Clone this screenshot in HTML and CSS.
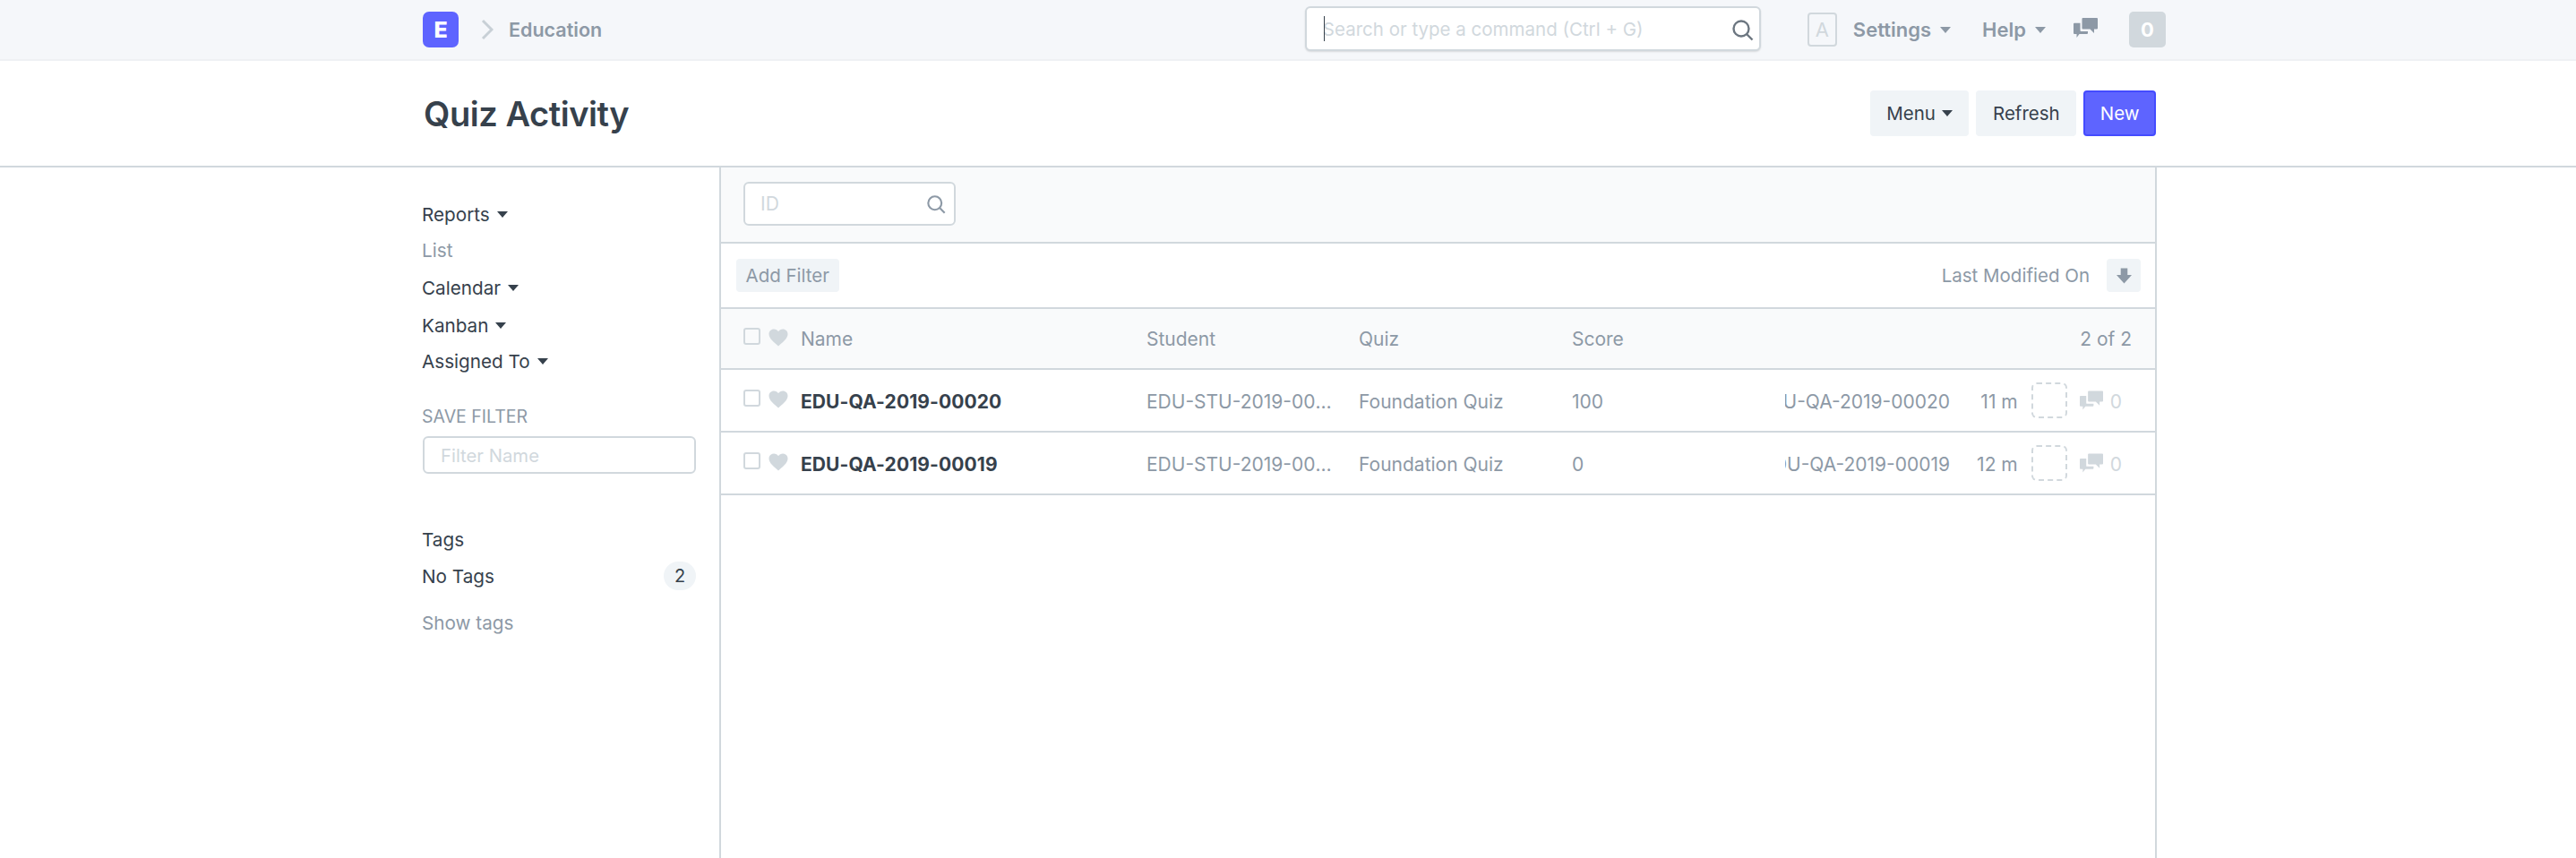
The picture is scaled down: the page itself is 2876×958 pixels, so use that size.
FILE: index.html
```html
<!DOCTYPE html>
<html lang="en">
<head>
<meta charset="utf-8">
<title>Quiz Activity</title>
<link rel="stylesheet" href="styles.css">
</head>
<body>
<header class="navbar">
  <div class="wrap nav-inner">
    <div class="brand">E</div>
    <svg class="crumb-chevron" viewBox="0 0 14 24"><path d="M2 2 L12 12 L2 22"/></svg>
    <span class="crumb">Education</span>
    <div class="nav-search">
      <input class="nav-input" type="text" placeholder="Search or type a command (Ctrl + G)">
      <span class="text-caret"></span>
      <svg class="search-icon nav-search-icon" viewBox="0 0 24 24"><circle cx="10" cy="10" r="8.5"/><path d="M16 16 L22.5 22.5"/></svg>
    </div>
    <div class="avatar">A</div>
    <span class="nav-link nav-settings">Settings<i class="caret caret-nav"></i></span>
    <span class="nav-link nav-help">Help<i class="caret caret-nav"></i></span>
    <svg class="nav-chat" viewBox="0 0 27 22"><path d="M10.5 0H26a1 1 0 0 1 1 1v10.5a1 1 0 0 1-1 1h-3V17l-4.500-4.500H10.500a1 1 0 0 1-1-1V1a1 1 0 0 1 1-1z"/><path d="M1 5.700H7.500V14a1 1 0 0 0 1 1H16v2a1 1 0 0 1-1 1H6.500L3.500 22v-4H1a1 1 0 0 1-1-1V6.700a1 1 0 0 1 1-1z"/></svg>
    <div class="notif">0</div>
  </div>
</header>

<section class="page-head">
  <div class="wrap head-inner">
    <h1 class="title">Quiz Activity</h1>
    <div class="actions">
      <button class="btn">Menu<i class="caret caret-dark caret-btn"></i></button>
      <button class="btn">Refresh</button>
      <button class="btn btn-primary">New</button>
    </div>
  </div>
</section>

<div class="wrap body-row">
  <aside class="sidebar">
    <ul class="side-list">
      <li class="side-item">Reports<i class="caret caret-dark"></i></li>
      <li class="side-item side-muted">List</li>
      <li class="side-item side-tall">Calendar<i class="caret caret-dark"></i></li>
      <li class="side-item">Kanban<i class="caret caret-dark"></i></li>
      <li class="side-item">Assigned To<i class="caret caret-dark"></i></li>
    </ul>
    <div class="side-label">SAVE FILTER</div>
    <input class="side-input" type="text" placeholder="Filter Name">
    <div class="side-tags">Tags</div>
    <div class="side-notag"><span>No Tags</span><span class="count">2</span></div>
    <div class="side-show">Show tags</div>
  </aside>

  <main class="main">
    <div class="filter-bar">
      <div class="id-field">
        <input class="id-input" type="text" placeholder="ID">
        <svg class="search-icon id-search-icon" viewBox="0 0 24 24"><circle cx="10" cy="10" r="8.500"/><path d="M16 16 L22.500 22.500"/></svg>
      </div>
    </div>
    <div class="sort-bar">
      <span class="add-filter">Add Filter</span>
      <div class="sort-right">
        <span class="sort-label">Last Modified On</span>
        <span class="sort-btn"><svg viewBox="0 0 18 18"><path d="M5 0h8v8h5l-9 10-9-10h5z"/></svg></span>
      </div>
    </div>
    <div class="row row-head">
      <div class="cell-name">
        <span class="check"></span>
        <svg class="heart" viewBox="0 0 22 20"><path d="M11 19.500 C7 15.500 0.500 11.500 0.500 6 C0.500 2.800 3 0.500 6 0.500 C8 0.500 10 1.500 11 3.200 C12 1.500 14 0.500 16 0.500 C19 0.500 21.500 2.800 21.500 6 C21.500 11.500 15 15.500 11 19.500 Z"/></svg>
        <span>Name</span>
      </div>
      <span>Student</span>
      <span>Quiz</span>
      <span>Score</span>
      <span></span>
      <span class="count-all">2 of 2</span>
    </div>
    <div class="row row-item">
      <div class="cell-name">
        <span class="check"></span>
        <svg class="heart" viewBox="0 0 22 20"><path d="M11 19.500 C7 15.500 0.500 11.500 0.500 6 C0.500 2.800 3 0.500 6 0.500 C8 0.500 10 1.500 11 3.200 C12 1.500 14 0.500 16 0.500 C19 0.500 21.500 2.800 21.500 6 C21.500 11.500 15 15.500 11 19.500 Z"/></svg>
        <span class="doc-name">EDU-QA-2019-00020</span>
      </div>
      <span class="ellipsis">EDU-STU-2019-00001</span>
      <span>Foundation Quiz</span>
      <span>100</span>
      <span class="clip"><span>EDU-QA-2019-00020</span></span>
      <div class="meta">
        <span class="age">11 m</span>
        <span class="assign"></span>
        <svg class="row-chat" viewBox="0 0 27 22"><path d="M10.5 0H26a1 1 0 0 1 1 1v10.5a1 1 0 0 1-1 1h-3V17l-4.500-4.500H10.500a1 1 0 0 1-1-1V1a1 1 0 0 1 1-1z"/><path d="M1 5.700H7.500V14a1 1 0 0 0 1 1H16v2a1 1 0 0 1-1 1H6.500L3.500 22v-4H1a1 1 0 0 1-1-1V6.700a1 1 0 0 1 1-1z"/></svg>
        <span class="chat-count">0</span>
      </div>
    </div>
    <div class="row row-item">
      <div class="cell-name">
        <span class="check"></span>
        <svg class="heart" viewBox="0 0 22 20"><path d="M11 19.500 C7 15.500 0.500 11.500 0.500 6 C0.500 2.800 3 0.500 6 0.500 C8 0.500 10 1.500 11 3.200 C12 1.500 14 0.500 16 0.500 C19 0.500 21.500 2.800 21.500 6 C21.500 11.500 15 15.500 11 19.500 Z"/></svg>
        <span class="doc-name">EDU-QA-2019-00019</span>
      </div>
      <span class="ellipsis">EDU-STU-2019-00001</span>
      <span>Foundation Quiz</span>
      <span>0</span>
      <span class="clip"><span>EDU-QA-2019-00019</span></span>
      <div class="meta">
        <span class="age">12 m</span>
        <span class="assign"></span>
        <svg class="row-chat" viewBox="0 0 27 22"><path d="M10.5 0H26a1 1 0 0 1 1 1v10.5a1 1 0 0 1-1 1h-3V17l-4.500-4.500H10.500a1 1 0 0 1-1-1V1a1 1 0 0 1 1-1z"/><path d="M1 5.700H7.500V14a1 1 0 0 0 1 1H16v2a1 1 0 0 1-1 1H6.500L3.500 22v-4H1a1 1 0 0 1-1-1V6.700a1 1 0 0 1 1-1z"/></svg>
        <span class="chat-count">0</span>
      </div>
    </div>
  </main>
</div>
</body>
</html>
```

FILE: styles.css
```css
* { box-sizing: border-box; }
html, body { margin: 0; padding: 0; }
body {
  font-family: Inter, "Liberation Sans", sans-serif;
  font-size: 21px;
  color: #36414c;
  background: #fff;
  height: 958px;
  overflow: hidden;
  -webkit-font-smoothing: antialiased;
}
input, button { font: inherit; }
.wrap { margin-left: 470px; width: 1938px; }

/* top navbar */
.navbar { height: 68px; background: #f5f7fa; border-bottom: 2px solid #eff1f4; }
.nav-inner { height: 66px; display: flex; align-items: center; width: 1950px; padding-right: 2px; }
.brand {
  width: 40px; height: 40px; margin-left: 2px;
  background: #5e64ff; border-radius: 7px;
  color: #fff; font-weight: 800; font-size: 25px;
  display: flex; align-items: center; justify-content: center;
}
.crumb-chevron { width: 14px; height: 24px; margin-left: 25px; fill: none; stroke: #c8d0d6; stroke-width: 3; }
.crumb { margin-left: 17px; font-weight: 600; color: #8d99a6; font-size: 21.5px; }
.nav-search { position: relative; margin-left: auto; width: 509px; height: 50px; font-size: 20.5px; margin-top: -2px; }
.nav-input {
  width: 100%; height: 100%;
  padding: 0 60px 0 18px;
  border: 2px solid #d1d8dd; border-radius: 6px;
  box-shadow: 0 1px 2px rgba(0,0,0,.12);
  background: #fff; outline: none; color: #36414c;
}
.nav-input::placeholder { color: #d1d8dd; opacity: 1; }
.text-caret { position: absolute; left: 21px; top: 11px; width: 1px; height: 28px; background: #36414c; }
.search-icon { fill: none; stroke: #6c7680; stroke-width: 2.4; }
.nav-search-icon { position: absolute; right: 8px; top: 15px; width: 24px; height: 24px; }
.avatar {
  width: 33px; height: 38px; margin-left: 52px;
  border: 2px solid #d1d8dd; border-radius: 4px;
  color: #d1d8dd; font-size: 22px; display: flex; align-items: center; justify-content: center;
}
.nav-link { font-weight: 600; color: #8d99a6; display: inline-flex; align-items: center; font-size: 22px; }
.nav-settings { margin-left: 18px; }
.nav-help { margin-left: 35px; }
.caret { display: inline-block; width: 0; height: 0; border-left: 6px solid transparent; border-right: 6px solid transparent; }
.caret-nav { border-top: 7px solid #8d99a6; margin-left: 10px; }
.caret-dark { border-top: 7px solid #36414c; margin-left: 8px; }
.caret-btn { margin-left: 7px; }
.nav-chat { width: 27px; height: 22px; margin-left: 31px; margin-top: -4px; fill: #8d99a6; }
.notif {
  width: 41px; height: 40px; margin-left: 35px;
  background: #d1d8dd; border-radius: 5px;
  color: #fff; font-weight: 700; font-size: 22px;
  display: flex; align-items: center; justify-content: center;
}

/* page head */
.page-head { height: 119px; border-bottom: 2px solid #d1d8dd; }
.head-inner { height: 117px; display: flex; align-items: center; justify-content: space-between; }
.title { margin: 0 0 0 3px; font-size: 38px; letter-spacing: -0.45px; font-weight: 600; color: #36414c; }
.actions { display: flex; gap: 8px; margin-right: 1px; }
.btn {
  height: 51px; padding: 0 18.5px;
  background: #f0f4f7; border: 0; border-radius: 4px; color: #36414c;
  font-size: 20.5px;
  display: flex; align-items: center;
}
.btn-primary { background: #5e64ff; border: 2px solid #444bff; color: #fff; padding: 0 16.5px; }

/* body */
.body-row { display: flex; height: 771px; }
.sidebar { width: 333px; padding: 32px 0 0 1px; flex: none; font-size: 20.7px; }
.side-list { list-style: none; margin: 0; padding: 0; }
.side-item { height: 40px; display: flex; align-items: center; color: #36414c; }
.side-tall { height: 44px; }
.side-muted { color: #8d99a6; }
.side-label { margin-top: 28px; line-height: 28px; font-size: 19.5px; color: #8d99a6; }
.side-input {
  display: block; margin-top: 8px; margin-left: 1px;
  width: 305px; height: 42px; padding: 0 18px;
  border: 2px solid #d1d8dd; border-radius: 6px; outline: none; font-size: 20.3px;
}
.side-input::placeholder, .id-input::placeholder { color: #d1d8dd; opacity: 1; }
.side-tags { margin-top: 59px; line-height: 30px; }
.side-notag { margin-top: 9px; width: 306px; display: flex; align-items: center; justify-content: space-between; height: 32px; }
.count { width: 36px; height: 32px; border-radius: 16px; background: #f0f4f7; display: flex; align-items: center; justify-content: center; font-size: 20px; }
.side-show { margin-top: 22px; line-height: 30px; color: #8d99a6; }

.main { flex: 1; border-left: 2px solid #d1d8dd; border-right: 2px solid #d1d8dd; }
.filter-bar { height: 85px; background: #f9fafb; border-bottom: 2px solid #d1d8dd; padding: 16px 0 0 25px; }
.id-field { position: relative; width: 237px; height: 49px; }
.id-input { width: 100%; height: 100%; padding: 0 17px; border: 2px solid #d1d8dd; border-radius: 6px; background: #fff; outline: none; }
.id-search-icon { position: absolute; right: 11px; top: 15px; width: 21px; height: 21px; stroke: #8d99a6; }

.sort-bar { height: 73px; border-bottom: 2px solid #d1d8dd; display: flex; align-items: center; justify-content: space-between; padding: 0 16px 0 17px; }
.add-filter { height: 37px; padding: 0 10.5px; display: flex; align-items: center; background: #f0f4f7; border-radius: 4px; color: #8d99a6; font-size: 20.5px; }
.sort-right { display: flex; align-items: center; gap: 19px; }
.sort-label { color: #8d99a6; font-size: 20.5px; }
.sort-btn { width: 38px; height: 37px; background: #f0f4f7; border-radius: 4px; display: flex; align-items: center; justify-content: center; }
.sort-btn svg { width: 17px; height: 18px; fill: #8d99a6; }

.row {
  height: 70px; border-bottom: 2px solid #d1d8dd;
  display: grid; grid-template-columns: 450px 237px 238px 238px 184px 1fr;
  align-items: center; padding-left: 25px; color: #8d99a6;
}
.row-head { height: 68px; background: #f9fafb; }
.row-item { padding-top: 2px; }
.cell-name { display: flex; align-items: center; }
.check { width: 19px; height: 19px; border: 2px solid #d1d8dd; border-radius: 3px; margin-top: -6px; flex: none; }
.row-item .check { margin-top: -8px; }
.heart { width: 22px; height: 20px; margin-left: 9px; margin-top: -3px; fill: #d1d8dd; flex: none; }
.row-item .heart { margin-top: -5px; }
.cell-name > span:last-child { margin-left: 14px; }
.doc-name { font-weight: 700; color: #36414c; letter-spacing: 0.1px; }
.ellipsis { display: block; overflow: hidden; white-space: nowrap; text-overflow: ellipsis; width: 212px; }
.clip { display: flex; justify-content: flex-end; overflow: hidden; white-space: nowrap; }
.count-all { justify-self: end; padding-right: 26px; }
.meta { display: flex; align-items: center; justify-content: flex-end; padding-right: 37px; margin-top: -2px; }
.age { white-space: nowrap; margin-top: 2px; }
.assign { width: 40px; height: 40px; margin-left: 15px; border: 2px dashed #d1d8dd; border-radius: 6px; flex: none; }
.row-chat { width: 26px; height: 22px; margin-left: 14px; fill: #d1d8dd; flex: none; }
.chat-count { margin-left: 8px; color: #d1d8dd; margin-top: 2px; }
```
